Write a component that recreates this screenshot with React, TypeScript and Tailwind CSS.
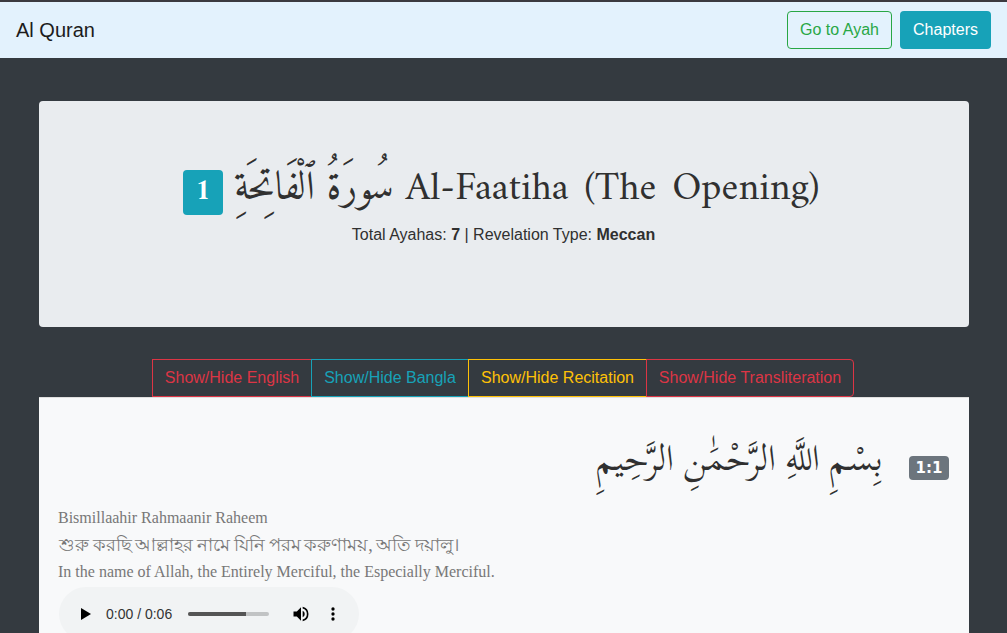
import React from 'react';

const toggles = [
  { label: 'Show/Hide English', style: 'w-[160px] border-[#dc3545] text-[#dc3545]' },
  { label: 'Show/Hide Bangla', style: 'w-[158px] border-[#17a2b8] text-[#17a2b8]' },
  { label: 'Show/Hide Recitation', style: 'w-[179px] border-[#ffc107] text-[#ffc107]' },
  { label: 'Show/Hide Transliteration', style: 'w-[208px] rounded-r border-[#dc3545] text-[#dc3545]' },
];

function Navbar() {
  return (
    <nav className="flex h-[58px] items-start justify-between border-t-2 border-[#3b3a40] bg-[#e3f2fd] px-4">
      <span className="pt-[13px] text-xl leading-[30px] text-[#1c1c1c]">Al Quran</span>
      <div className="flex gap-2 pt-[9px]">
        <button className="h-[38px] w-[105px] rounded border border-[#28a745] text-[#28a745]">Go to Ayah</button>
        <button className="h-[38px] w-[91px] rounded bg-[#17a2b8] text-white">Chapters</button>
      </div>
    </nav>
  );
}

function ChapterHeader() {
  return (
    <header className="h-[226px] w-[930px] rounded bg-[#e9ecef] pt-[57px] text-center">
      <h1 className="flex h-[65px] items-start whitespace-nowrap pl-36 text-left font-['Amiri','Liberation_Serif',serif] text-[40px] leading-[62px]">
        <span className="mt-3 flex h-[45px] w-10 items-center justify-center rounded bg-[#17a2b8] pb-0.5 text-[30px] font-bold leading-none text-white">1</span>
        <span dir="rtl" lang="ar" className="ml-[11px]">سُورَةُ ٱلْفَاتِحَةِ</span>
        <span className="ml-3 tracking-[0.1px] [word-spacing:4px]">Al-Faatiha (The Opening)</span>
      </h1>
      <p className="pr-px">Total Ayahas: <b>7</b> | Revelation Type: <b>Meccan</b></p>
    </header>
  );
}

function AudioPlayer() {
  return (
    <div className="flex h-[54px] w-[300px] items-center rounded-full bg-[#f1f3f4] pl-[22px]">
      <svg width="10" height="12" viewBox="0 0 10 12" className="shrink-0"><path d="M0 0v12l10-6z" /></svg>
      <span className="ml-[15px] w-[67px] whitespace-nowrap text-sm text-[#333]">0:00 / 0:06</span>
      <span className="ml-[15px] h-1 w-[81px] overflow-hidden rounded-full bg-[#c1c3c4]">
        <span className="block h-full w-[58px] bg-[#555]" />
      </span>
      <svg width="20" height="20" viewBox="0 0 24 24" className="ml-[22px] shrink-0">
        <path d="M3 9v6h4l5 5V4L7 9H3zm13.5 3A4.5 4.5 0 0 0 14 7.97v8.05A4.5 4.5 0 0 0 16.5 12zM14 3.23v2.06a7 7 0 0 1 0 13.42v2.06a9 9 0 0 0 0-17.54z" />
      </svg>
      <svg width="20" height="20" viewBox="0 0 24 24" className="ml-3 shrink-0">
        <path d="M12 8a2 2 0 1 0 0-4 2 2 0 0 0 0 4zm0 2a2 2 0 1 0 0 4 2 2 0 0 0 0-4zm0 6a2 2 0 1 0 0 4 2 2 0 0 0 0-4z" />
      </svg>
    </div>
  );
}

export default function App() {
  return (
    <div className="h-[633px] overflow-hidden bg-[#343a40] font-['Liberation_Sans',Arial,sans-serif] text-base leading-6 text-[#303030]">
      <Navbar />
      <main className="pl-[39px] pt-[43px]">
        <ChapterHeader />
        <div className="mt-8 flex h-[38px] pl-[113px]">
          {toggles.map((t, i) => (
            <button key={t.label} className={`h-[38px] shrink-0 whitespace-nowrap border ${i > 0 ? '-ml-px' : ''} ${t.style}`}>{t.label}</button>
          ))}
        </div>
        <section className="h-[236px] w-[930px] border-t border-[#dfdfdf] bg-[#f8f9fa] px-5 pt-[34px]">
          <div className="flex h-[74px] items-start justify-end">
            <span dir="rtl" lang="ar" className="whitespace-nowrap font-['Scheherazade_New','Scheherazade','Noto_Naskh_Arabic','DejaVu_Sans',serif] text-[35.7px] leading-[54px]">بِسْمِ اللَّهِ الرَّحْمَٰنِ الرَّحِيمِ</span>
            <span className="ml-[26px] mt-[24px] flex h-6 w-10 items-center justify-center rounded bg-[#6c757d] font-['DejaVu_Sans',sans-serif] text-[15px] font-bold leading-none text-white">1:1</span>
          </div>
          <div className="-ml-px font-['Liberation_Serif',serif] text-base text-[#777]">
            <p className="h-[25px]">Bismillaahir Rahmaanir Raheem</p>
            <p lang="bn" className="h-[29px] pl-px text-[18px] leading-7 [word-spacing:-0.8px]">শুরু করছি আল্লাহর নামে যিনি পরম করুণাময়, অতি দয়ালু।</p>
            <p className="h-[27px]">In the name of Allah, the Entirely Merciful, the Especially Merciful.</p>
          </div>
          <AudioPlayer />
        </section>
      </main>
    </div>
  );
}
